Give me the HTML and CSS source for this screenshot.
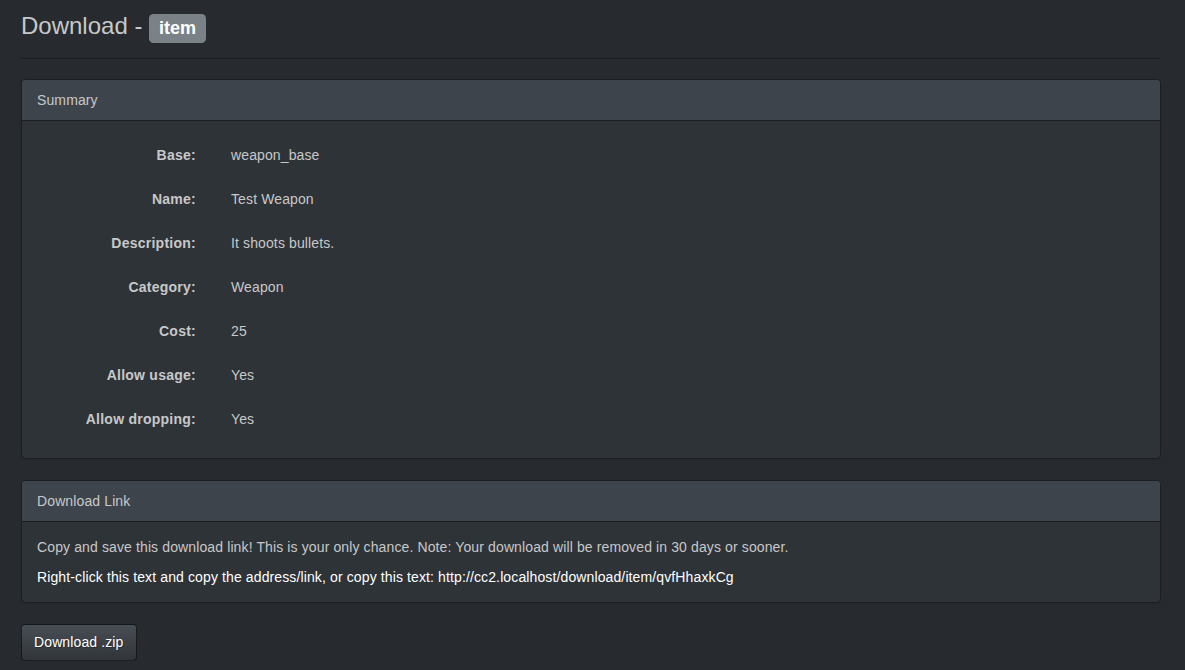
FILE: index.html
```html
<!DOCTYPE html>
<html lang="en">
<head>
<meta charset="utf-8">
<title>Download - item</title>
<link rel="stylesheet" href="styles.css">
</head>
<body>
<div class="container">
  <div class="page-header">
    <h3 class="title">Download - <span class="label">item</span></h3>
  </div>

  <div class="panel">
    <div class="panel-heading">Summary</div>
    <div class="panel-body summary">
      <div class="row"><div class="key">Base:</div><div class="val">weapon_base</div></div>
      <div class="row"><div class="key">Name:</div><div class="val">Test Weapon</div></div>
      <div class="row"><div class="key">Description:</div><div class="val">It shoots bullets.</div></div>
      <div class="row"><div class="key">Category:</div><div class="val">Weapon</div></div>
      <div class="row"><div class="key">Cost:</div><div class="val">25</div></div>
      <div class="row"><div class="key">Allow usage:</div><div class="val">Yes</div></div>
      <div class="row"><div class="key">Allow dropping:</div><div class="val">Yes</div></div>
    </div>
  </div>

  <div class="panel">
    <div class="panel-heading">Download Link</div>
    <div class="panel-body">
      <p class="note">Copy and save this download link! This is your only chance. Note: Your download will be removed in 30 days or sooner.</p>
      <a class="dl-link" href="#">Right-click this text and copy the address/link, or copy this text: http://cc2.localhost/download/item/qvfHhaxkCg</a>
    </div>
  </div>

  <button class="btn" type="button">Download .zip</button>
</div>
</body>
</html>
```

FILE: styles.css
```css
html, body {
  margin: 0;
  padding: 0;
}

body {
  background: #272b30;
  color: #c8c8c8;
  font-family: "Liberation Sans", Arial, sans-serif;
  font-size: 14px;
  line-height: 20px;
  letter-spacing: 0.12px;
  height: 670px;
  overflow: hidden;
}

.container {
  width: 1140px;
  padding: 0 21px;
}

.page-header {
  padding: 13px 0 19px;
  border-bottom: 1px solid #1c1e22;
  margin-bottom: 20px;
}

.title {
  margin: 0;
  font-size: 24px;
  font-weight: 500;
  line-height: 26px;
  letter-spacing: 0;
  color: #c8c8c8;
}

.label {
  display: inline;
  background: #7a8288;
  color: #fff;
  font-size: 18px;
  font-weight: bold;
  line-height: 1;
  padding: 0.2em 0.55em 0.3em;
  border-radius: 0.25em;
}

.panel {
  background: #2e3338;
  border: 1px solid #1c1e22;
  border-radius: 4px;
  margin-bottom: 21px;
  box-shadow: 0 1px 1px rgba(0, 0, 0, 0.05);
}

.panel-heading {
  background: #3e444c;
  border-bottom: 1px solid #1c1e22;
  padding: 10px 15px;
  border-radius: 3px 3px 0 0;
  color: #c8c8c8;
}

.panel-body {
  padding: 15px;
}

.summary {
  padding: 24px 15px 29px;
  display: flex;
  flex-direction: column;
  gap: 24px;
}

.row {
  display: flex;
  gap: 35px;
}

.key {
  width: 159px;
  text-align: right;
  font-weight: bold;
  letter-spacing: 0.25px;
}

.note {
  margin: 0 0 10px;
}

.dl-link {
  display: block;
  color: #fff;
  text-decoration: none;
}

.btn {
  font-family: "Liberation Sans", Arial, sans-serif;
  font-size: 14px;
  line-height: 20px;
  letter-spacing: 0.12px;
  color: #fff;
  padding: 7px 12px 8px;
  border: 1px solid rgba(0, 0, 0, 0.6);
  border-radius: 4px;
  background: linear-gradient(#484e55, #3a3f44 60%, #313539);
  text-shadow: 1px 1px 1px rgba(0, 0, 0, 0.3);
  cursor: pointer;
}
```
